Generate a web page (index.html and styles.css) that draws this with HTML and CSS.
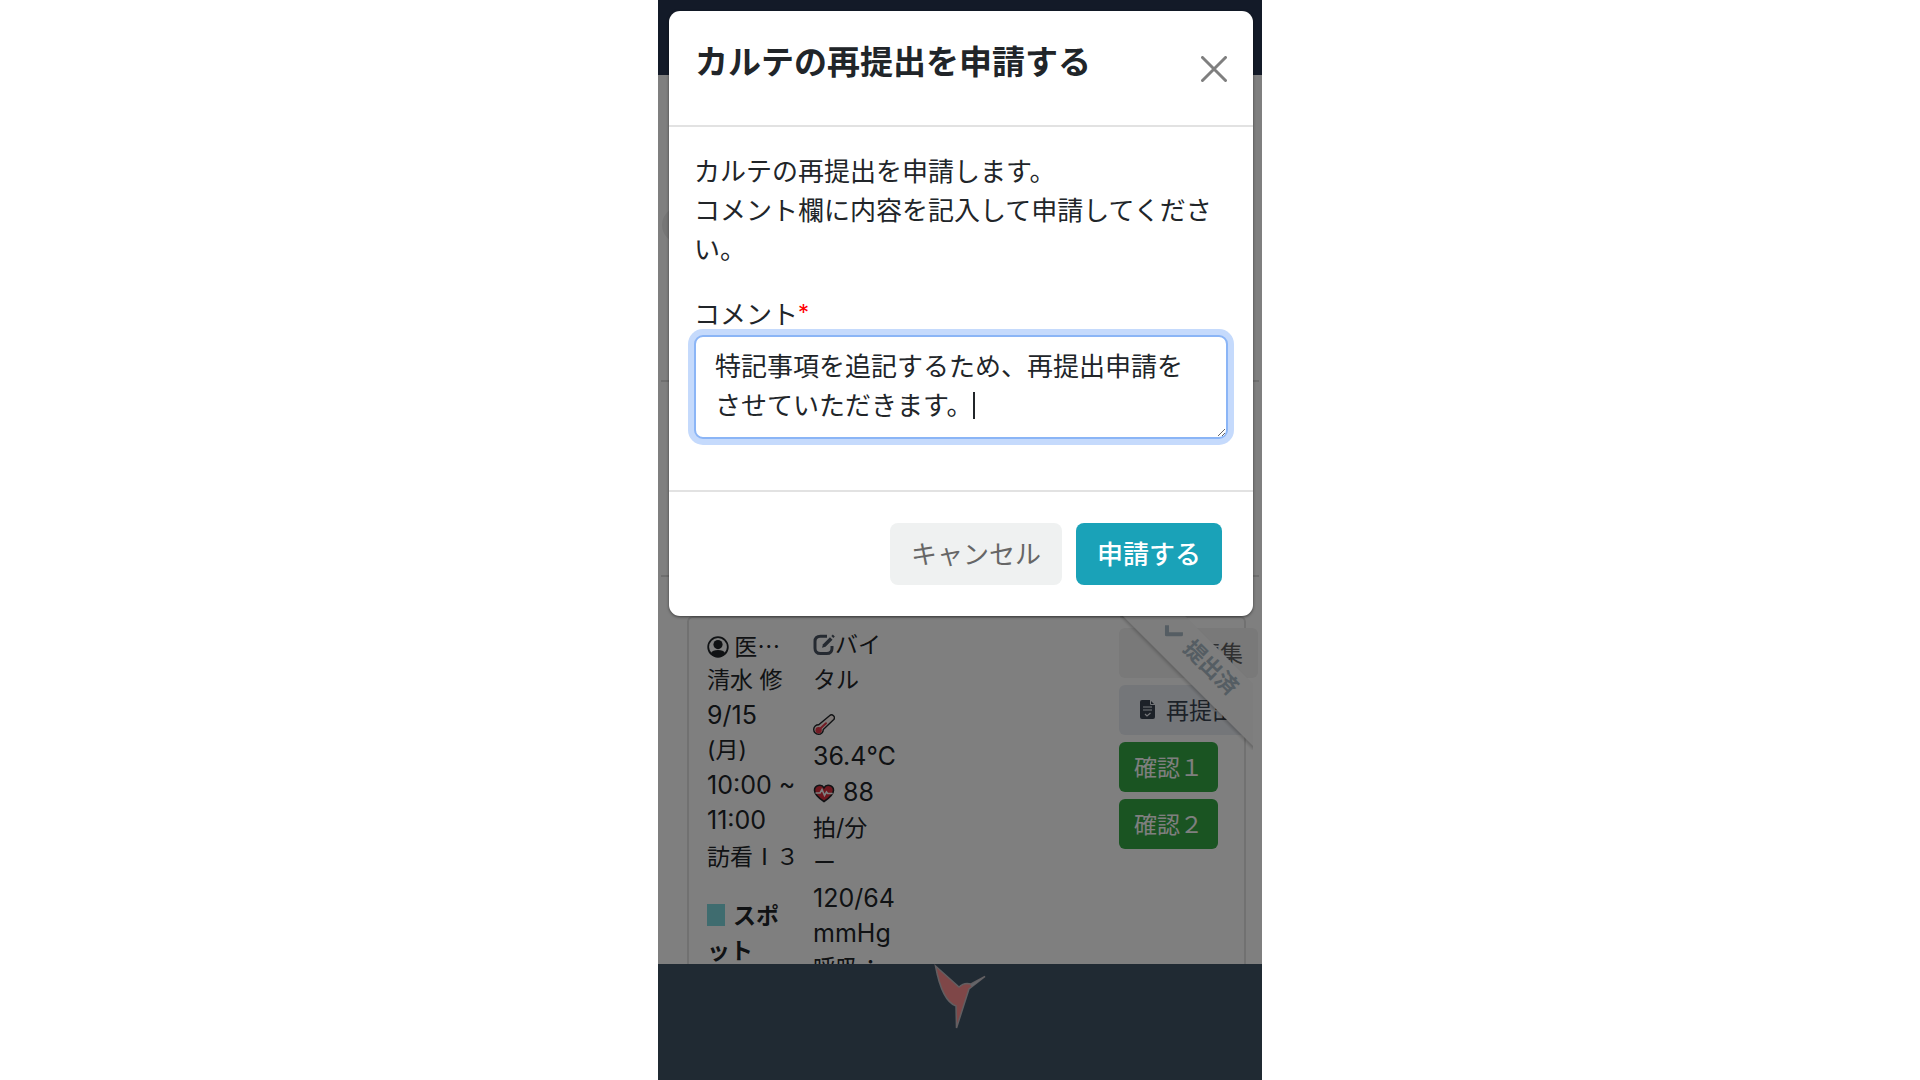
FILE: index.html
```html
<!DOCTYPE html>
<html lang="ja">
<head>
    <meta charset="UTF-8">
    <meta name="viewport" content="width=device-width, initial-scale=1.0">
    <title>カルテの再提出を申請する</title>
    <link rel="stylesheet" href="styles.css">
</head>
<body>
    <div class="app">
        <header class="top-bar"></header>

        <main class="content">
            <div class="search-area"><div class="nav-circle"></div></div>
            <div class="filter-area"></div>

            <!-- karte card -->
            <div class="karte-card">
                <div class="visit-col">
                    <div class="full-width">
                        <svg class="icon" viewBox="0 0 22 22">
                            <circle cx="11" cy="11" r="9.8" fill="none" stroke="#212529" stroke-width="1.8"/>
                            <circle cx="11" cy="8.6" r="4.6" fill="#212529"/>
                            <path d="M3.6 17.4C5 14.6 7.4 14 11 14s6 .6 7.4 3.4A10 10 0 0 1 3.6 17.4z" fill="#212529"/>
                        </svg>
                        <span>医…</span>
                    </div>
                    <div>清水 修</div>
                    <div class="num">9/15</div>
                    <div>(月)</div>
                    <div class="num">10:00 ~</div>
                    <div class="num">11:00</div>
                    <div class="full-width">訪看Ⅰ３</div>
                    <div class="spot"><span class="spot-mark"></span>スポ<br>ット</div>
                </div>

                <div class="vital-col">
                    <div class="vital-title">
                        <svg class="icon" viewBox="0 0 22 22">
                            <path d="M14 2.3H7.5Q2 2.3 2 7.5v6.8q0 5.3 5.500 5.300h6.200q5.300 0 5.300-5.300V12" fill="none" stroke="#4b5563" stroke-width="3"/>
                            <path d="M9 13.800L10 10.200L17 3.200L19.500 5.700L12.500 12.700z" fill="#4b5563"/>
                            <path d="M18.300 2l1.500-1.500 2 2-1.500 1.500z" fill="#4b5563"/>
                        </svg>バイ
                    </div>
                    <div>タル</div>
                    <div class="thermo-row">
                        <svg class="icon" viewBox="0 0 22 22">
                            <path d="M16.500 1.800a2.800 2.800 0 0 1 4 4L10.300 15.500a4.800 4.800 0 1 1-4.600-4.800z" fill="#fff3ee" stroke="#212529" stroke-width="1.400"/>
                            <circle cx="5.600" cy="16.200" r="3.200" fill="#e6394a"/>
                            <path d="M6 15.800L13 9.200" stroke="#e6394a" stroke-width="2" stroke-linecap="round"/>
                        </svg>
                    </div>
                    <div class="num">36.4℃</div>
                    <div class="pulse-row">
                        <svg class="icon heart" viewBox="0 0 22 22">
                            <path d="M11 19.500C5 15.500 1.500 12.200 1.500 8.200 1.500 3.200 8.500 1.500 11 5.800 13.500 1.500 20.500 3.200 20.500 8.200c0 4-3.500 7.300-9.500 11.300z" fill="#dc2f3c" stroke="#212529" stroke-width="1.600"/>
                            <path d="M2.500 11H7l2-3.500 2.500 6 2-3.500 1.200 1.500h5" fill="none" stroke="#fff" stroke-width="1.600"/>
                        </svg>
                        <span class="num">88</span>
                    </div>
                    <div>拍/分</div>
                    <div>ー</div>
                    <div class="num">120/64</div>
                    <div class="num">mmHg</div>
                    <div>呼吸：</div>
                </div>

                <div class="action-col">
                    <button type="button" class="small-btn edit-btn" disabled>編集</button>
                    <button type="button" class="small-btn resubmit-btn">
                        <svg class="doc-icon" viewBox="0 0 15 19">
                            <path d="M2 0h8l5 5v12q0 2-2 2H2q-2 0-2-2V2Q0 0 2 0z" fill="#394350"/>
                            <path d="M10.500 0v4.500H15" fill="none" stroke="#e9edf3" stroke-width="1"/>
                            <path d="M3 7h9M3 10h9M5 14l2 2 3.500-3" fill="none" stroke="#e9edf3" stroke-width="1.200"/>
                        </svg>
                        再提出
                    </button>
                    <button type="button" class="small-btn confirm-btn">確認１</button>
                    <button type="button" class="small-btn confirm-btn">確認２</button>
                </div>

                <div class="ribbon">
                    <div class="ribbon-band">
                        <svg class="check" viewBox="0 0 20 20"><path d="M1.500 11.400L7.900 17.800L19.200 6.500" fill="none" stroke="#aabbc6" stroke-width="4"/></svg>
                        提出済
                    </div>
                </div>
            </div>
        </main>

        <footer class="bottom-bar">
            <svg class="bird" viewBox="0 0 52 66">
                <path d="M1.500 2L25 23Q30 18 37 20L51 12.500L35 25L22.500 64L22 42Q8 37 1.500 2z" fill="#ff8f90" stroke="#c4bcc2" stroke-width="1.500"/>
                <path d="M36 21L51 12.500L38 22.500z" fill="#c8ccd4"/>
            </svg>
        </footer>

        <!-- resubmit modal -->
        <div class="modal-backdrop">
            <form class="modal" role="dialog" aria-labelledby="modal-title">
                <div class="modal-header">
                    <h1 id="modal-title">カルテの再提出を申請する</h1>
                    <button type="button" class="close-btn" aria-label="閉じる">
                        <svg viewBox="0 0 26 26"><path d="M1.500 1.500l23 23M24.500 1.500l-23 23" stroke="#7f7f7f" stroke-width="3" stroke-linecap="round"/></svg>
                    </button>
                </div>
                <div class="modal-body">
                    <p>カルテの再提出を申請します。<br>コメント欄に内容を記入して申請してください。</p>
                    <label for="comment">コメント<span class="required">*</span></label>
                    <div class="comment-field">
                        <textarea id="comment" rows="2">特記事項を追記するため、再提出申請をさせていただきます。</textarea>
                        <span class="caret"></span>
                    </div>
                </div>
                <div class="modal-footer">
                    <button type="button" class="btn btn-cancel">キャンセル</button>
                    <button type="button" class="btn btn-submit">申請する</button>
                </div>
            </form>
        </div>
    </div>
</body>
</html>
```

FILE: styles.css
```css
*{
    box-sizing: border-box;
}
body{
    margin: 0;
    background-color: #fff;
    color: #212529;
    font-family: Inter, "Noto Sans CJK JP", sans-serif;
}
button, textarea{
    font-family: inherit;
}
button{
    border: 0;
    padding: 0;
}
.app{
    position: relative;
    display: flex;
    flex-direction: column;
    max-width: 604px;
    height: 100vh;
    margin: 0 auto;
    overflow: hidden;
}
.top-bar{
    flex: none;
    height: 75px;
    background-color: #263550;
}
.content{
    flex: 1;
    min-height: 0;
    overflow: hidden;
}
.bottom-bar{
    flex: none;
    height: 116px;
    background-color: #405466;
    text-align: center;
}
.bird{
    width: 52px;
    height: 66px;
}

/* area above the card */
.search-area{
    height: 305px;
    padding-top: 132px;
}
.nav-circle{
    width: 36px;
    height: 36px;
    margin-left: 4px;
    border-radius: 50%;
    background-color: #ececec;
}
.filter-area{
    height: 197px;
    margin: 0 3px;
    border-top: 2px solid #ddd;
    border-bottom: 2px solid #ddd;
}

/* card */
.karte-card{
    position: relative;
    display: flex;
    min-height: 500px;
    margin: 39px 16px 0 29px;
    padding: 10px 0 0 18px;
    border: 2px solid #e2e2e2;
    border-radius: 6px;
    font-size: 23px;
    line-height: 35px;
    white-space: nowrap;
}
.icon{
    width: 22px;
    height: 22px;
    vertical-align: -3px;
}
.num{
    font-size: 25px;
}
.visit-col{
    width: 106px;
}
.full-width{
    font-family: "Noto Sans CJK JP", sans-serif;
}
.spot{
    margin-top: 26px;
    font-weight: bold;
}
.spot-mark{
    display: inline-block;
    width: 18px;
    height: 22px;
    margin-right: 8px;
    background-color: #7fd8de;
    vertical-align: -2px;
}
.vital-col{
    flex: 1;
}
.thermo-row{
    display: flex;
    align-items: flex-end;
    height: 41px;
    padding-bottom: 3px;
}
.pulse-row{
    display: flex;
    align-items: center;
    gap: 8px;
    height: 37px;
}
.action-col{
    display: flex;
    flex-direction: column;
    align-items: flex-start;
    gap: 7px;
    width: 125px;
}
.small-btn{
    height: 50px;
    padding: 0 15px 3px;
    border-radius: 6px;
    font-size: 23px;
    white-space: nowrap;
}
.edit-btn{
    min-width: 139px;
    text-align: right;
    background-color: #f2f2f2;
    color: #606060;
}
.resubmit-btn{
    display: flex;
    align-items: center;
    gap: 11px;
    padding: 0 12px 2px 21px;
    background-color: #e9edf3;
    color: #394350;
}
.doc-icon{
    width: 15px;
    height: 19px;
}
.confirm-btn{
    background-color: #35a845;
    color: #fff;
}

/* submitted ribbon over the card corner */
.ribbon{
    position: absolute;
    top: -2px;
    right: -9px;
    width: 133px;
    height: 134px;
    overflow: hidden;
}
.ribbon-band{
    position: absolute;
    top: 22px;
    left: -42px;
    display: flex;
    align-items: center;
    justify-content: center;
    gap: 9px;
    width: 240px;
    height: 44px;
    padding-bottom: 8px;
    background-color: #fafafa;
    box-shadow: 0 2px 3px rgba(0, 0, 0, 0.2);
    color: #aabbc6;
    font-size: 22px;
    font-weight: bold;
    transform: rotate(45deg);
}
.check{
    width: 20px;
    height: 20px;
}

/* modal */
.modal-backdrop{
    position: absolute;
    inset: 0;
    padding: 11px 9px 11px 11px;
    background-color: rgba(0, 0, 0, 0.5);
}
.modal{
    border-radius: 11px;
    background-color: #fff;
    box-shadow: 0 1px 3px rgba(0, 0, 0, 0.5);
    font-size: 26px;
    line-height: 39px;
}
.modal-header{
    display: flex;
    justify-content: space-between;
    padding: 26px 26px 38px;
    border-bottom: 2px solid #e2e2e2;
}
.modal-header h1{
    margin: 0;
    font-size: 33px;
    line-height: 50px;
}
.close-btn{
    width: 26px;
    height: 26px;
    margin-top: 19px;
    background: none;
}
.close-btn svg{
    display: block;
}
.modal-body{
    padding: 25px 25px 51px;
}
.modal-body p{
    margin: 0 0 26px;
}
.modal-body label{
    display: block;
}
.required{
    color: #f00;
    font-size: 22px;
    line-height: 22px;
    vertical-align: 4px;
}
.comment-field{
    position: relative;
    margin-top: 1px;
}
.comment-field textarea{
    display: block;
    width: 100%;
    height: 104px;
    padding: 10px 19px;
    border: 2px solid #8bb5f6;
    border-radius: 9px;
    outline: none;
    box-shadow: 0 0 0 6px #c5dafc;
    background-color: #fff;
    color: #212529;
    font-size: 26px;
    line-height: 39px;
    overflow: hidden;
}
.caret{
    position: absolute;
    top: 57px;
    left: 279px;
    width: 2px;
    height: 27px;
    background-color: #212529;
}
.modal-footer{
    display: flex;
    justify-content: flex-end;
    gap: 14px;
    padding: 31px;
    border-top: 2px solid #e2e2e2;
}
.btn{
    height: 62px;
    padding: 0 21px 4px;
    border-radius: 8px;
    font-size: 26px;
}
.btn-cancel{
    background-color: #eff1f1;
    color: #666;
}
.btn-submit{
    background-color: #1aa2b8;
    color: #fff;
    font-weight: 500;
}
```
